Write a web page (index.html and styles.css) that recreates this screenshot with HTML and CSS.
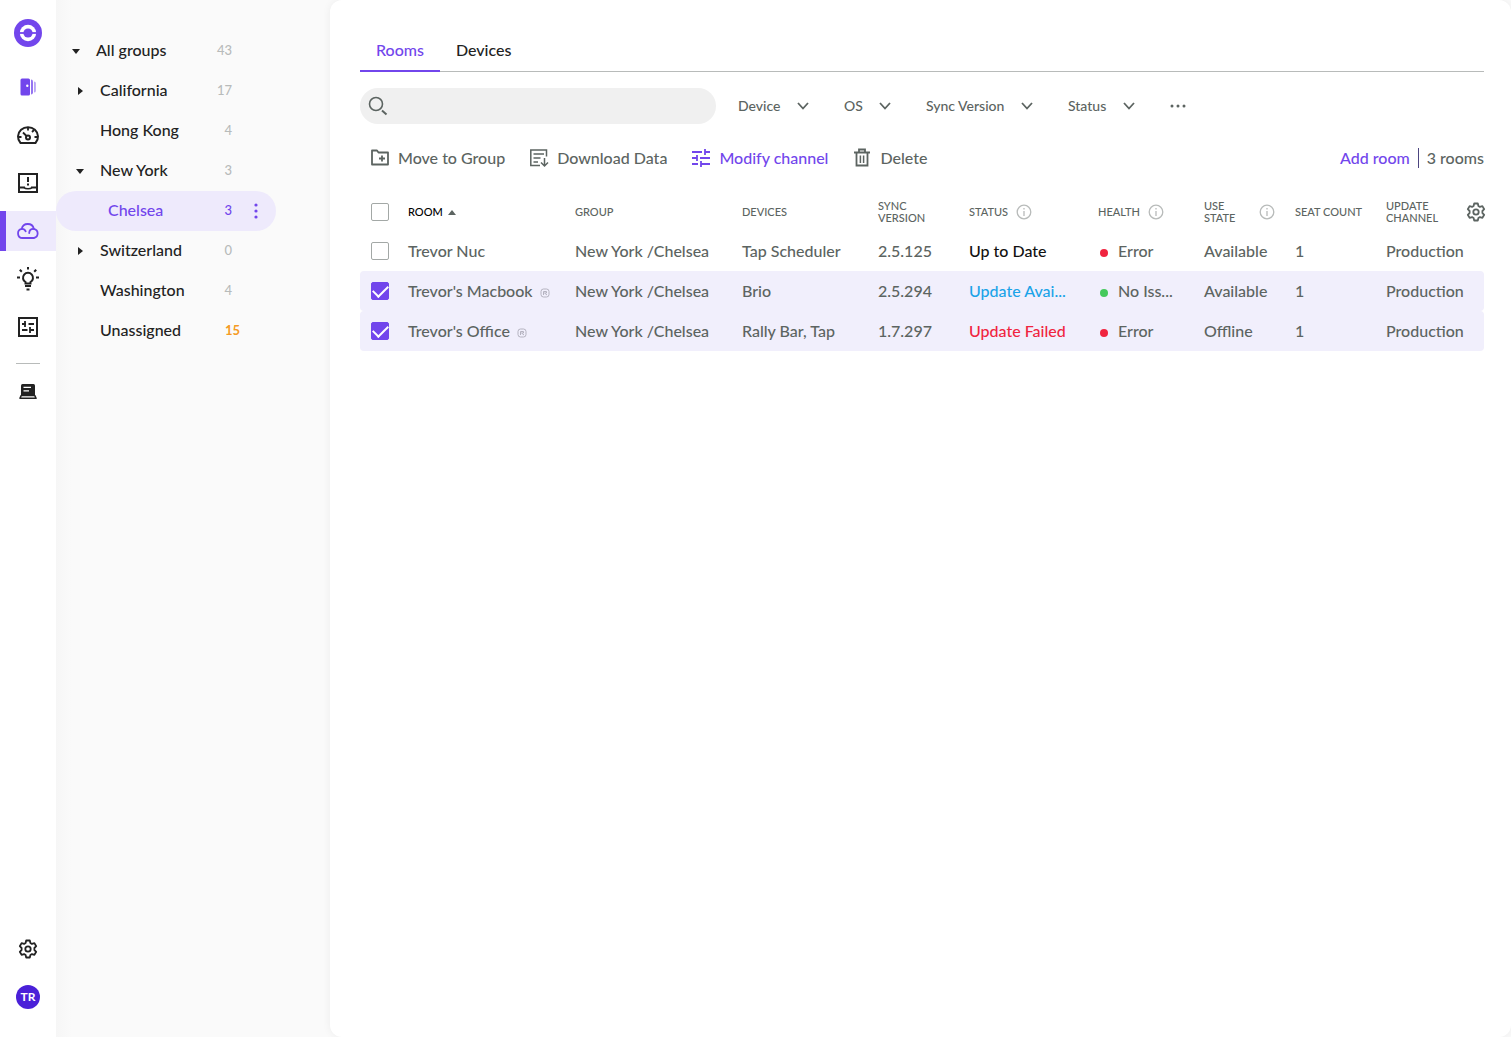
FILE: index.html
```html
<!DOCTYPE html>
<html lang="en">
<head>
    <meta charset="UTF-8">
    <meta name="viewport" content="width=device-width, initial-scale=1.0">
    <title>Sync - Rooms</title>
    <link rel="stylesheet" href="styles.css">
</head>
<body>
    <div class="app">

        <!-- Icon rail -->
        <nav class="rail" aria-label="Main">
            <a href="#" class="logo" aria-label="Home">
                <svg width="28" height="28" viewBox="0 0 28 28">
                    <circle cx="14" cy="14" r="14" fill="#7246ec"/>
                    <circle cx="14" cy="14" r="8.200" fill="#fff"/>
                    <path d="M5 14h18" stroke="#7246ec" stroke-width="1.800"/>
                    <circle cx="14" cy="14" r="4.600" fill="#7246ec"/>
                </svg>
            </a>
            <a href="#" class="rail-item" aria-label="Rooms">
                <svg width="24" height="24" viewBox="0 0 24 24" fill="#7246ec">
                    <path fill-rule="evenodd" d="M6 3.500h6.500a1.500 1.500 0 0 1 1.500 1.500v14a1.500 1.500 0 0 1-1.500 1.500H6A1.500 1.500 0 0 1 4.500 19V5A1.500 1.500 0 0 1 6 3.500zM11.300 9.600a1.200 1.200 0 1 0 0 2.400 1.200 1.200 0 0 0 0-2.400z"/>
                    <path d="M15 4.500a2 2 0 0 1 2 2v11a2 2 0 0 1-2 2z" opacity=".75"/>
                    <path d="M18.200 6.500a1.500 1.500 0 0 1 1.500 1.500v8a1.500 1.500 0 0 1-1.500 1.500z" opacity=".6"/>
                </svg>
            </a>
            <a href="#" class="rail-item" aria-label="Dashboard">
                <svg width="24" height="24" viewBox="0 0 24 24" fill="none" stroke="#222" stroke-width="2">
                    <path d="M4.500 20a10 9.500 0 1 1 15 0z" stroke-linejoin="round"/>
                    <circle cx="12" cy="14.500" r="2"/>
                    <path d="M10.500 13L7 9.500M12 4.500v3M2.500 14h3M18.500 14h3M16 9l2-2" stroke-width="1.800"/>
                </svg>
            </a>
            <a href="#" class="rail-item" aria-label="Alerts">
                <svg width="24" height="24" viewBox="0 0 24 24" fill="none" stroke="#222" stroke-width="2">
                    <path d="M3 3h18v18H3zM3 16.500h6M15 16.500h6"/>
                    <path d="M8 16.500c1.500 1.700 6.500 1.700 8 0" stroke-width="1.500"/>
                    <path d="M12 6v5M12 12.500v2"/>
                </svg>
            </a>
            <a href="#" class="rail-item active" aria-label="Updates">
                <svg width="24" height="24" viewBox="0 0 24 24" fill="none" stroke="#7246ec" stroke-width="1.800" stroke-linecap="round">
                    <path d="M6.500 19a4.600 4.600 0 0 1-.8-9.100 6.200 6.200 0 0 1 12.100-.1A4.700 4.700 0 0 1 18 19z"/>
                    <path d="M5.700 9.900c1.900-.1 3.300.8 4 2.400M17.800 9.800c-2.600-.1-4.500 1.600-4.600 4.200"/>
                </svg>
            </a>
            <a href="#" class="rail-item" aria-label="Insights">
                <svg width="24" height="24" viewBox="0 0 24 24" fill="none" stroke="#222" stroke-width="2">
                    <path d="M9.500 16.500v-1.300a5 5 0 1 1 5 0v1.300z"/>
                    <path d="M9 19h6M10.500 22.500h3M12 0v2.500M3.800 2.800l2 2M20.200 2.800l-2 2M1 10.500h3M20 10.500h3"/>
                </svg>
            </a>
            <a href="#" class="rail-item" aria-label="Room settings">
                <svg width="24" height="24" viewBox="0 0 24 24" fill="none" stroke="#222" stroke-width="2">
                    <path d="M3 3h18v18H3z"/>
                    <path d="M6 9h4M9 6v6M12.500 9H18M6 15h5.500M14 12v6M14 15h4" stroke-width="1.800"/>
                </svg>
            </a>
            <hr class="rail-line">
            <a href="#" class="rail-item" aria-label="Laptops">
                <svg width="24" height="24" viewBox="0 0 24 24">
                    <path d="M5 16V6.500A1.500 1.500 0 0 1 6.500 5h11A1.500 1.500 0 0 1 19 6.500V16z" fill="#222"/>
                    <path d="M5.200 16.500h13.600l1.200 2.700H4z" fill="#fff" stroke="#222" stroke-width="1.600" stroke-linejoin="round"/>
                    <path d="M7.500 8.300H15M7.500 11.800H13" stroke="#fff" stroke-width="1.300"/>
                </svg>
            </a>
            <a href="#" class="rail-item rail-bottom" aria-label="Settings">
                <svg class="gear" width="20" height="20" viewBox="0 0 20 20">
                    <path d="M8.200 1.500h3.600l.6 2.500 1.500.9 2.500-.8 1.800 3.100-1.800 1.800v2l1.800 1.800-1.800 3.100-2.500-.8-1.500.9-.6 2.500H8.200l-.6-2.500-1.500-.9-2.500.8-1.800-3.100L3.600 11V9L1.800 7.200l1.800-3.100 2.500.8L7.600 4z"/>
                    <circle cx="10" cy="10" r="2.700"/>
                </svg>
            </a>
            <button type="button" class="avatar">TR</button>
        </nav>

        <!-- Group tree -->
        <aside class="groups">
            <ul>
                <li><a href="#" class="group root"><span class="caret down"></span><span class="name">All groups</span><span class="count">43</span></a></li>
                <li><a href="#" class="group"><span class="caret right"></span><span class="name">California</span><span class="count">17</span></a></li>
                <li><a href="#" class="group"><span class="caret"></span><span class="name">Hong Kong</span><span class="count">4</span></a></li>
                <li><a href="#" class="group"><span class="caret down"></span><span class="name">New York</span><span class="count">3</span></a></li>
                <li class="selected">
                    <a href="#" class="group"><span class="caret"></span><span class="name">Chelsea</span><span class="count">3</span></a>
                    <button type="button" class="group-menu" aria-label="Group options">
                        <svg width="4" height="16" viewBox="0 0 4 16" fill="#7246ec"><circle cx="2" cy="2" r="1.600"/><circle cx="2" cy="8" r="1.600"/><circle cx="2" cy="14" r="1.600"/></svg>
                    </button>
                </li>
                <li><a href="#" class="group"><span class="caret right"></span><span class="name">Switzerland</span><span class="count">0</span></a></li>
                <li><a href="#" class="group"><span class="caret"></span><span class="name">Washington</span><span class="count">4</span></a></li>
                <li><a href="#" class="group unassigned"><span class="caret"></span><span class="name">Unassigned</span><span class="count">15</span></a></li>
            </ul>
        </aside>

        <main class="content">
            <nav class="tabs" aria-label="Views">
                <a href="#" class="tab active">Rooms</a>
                <a href="#" class="tab">Devices</a>
            </nav>

            <form class="filters">
                <div class="search">
                    <svg width="20" height="20" viewBox="0 0 20 20" fill="none" stroke="#5c6461" stroke-width="1.600">
                        <circle cx="8" cy="8" r="6.500"/>
                        <path d="M14 14.500l4.500 4" stroke-width="2"/>
                    </svg>
                    <input type="text" name="search" aria-label="Search rooms">
                </div>
                <div class="filter">
                    <select aria-label="Device"><option>Device</option></select>
                    <svg width="12" height="8" viewBox="0 0 12 8"><path d="M1 1l5 5.500L11 1"/></svg>
                </div>
                <div class="filter">
                    <select aria-label="OS"><option>OS</option></select>
                    <svg width="12" height="8" viewBox="0 0 12 8"><path d="M1 1l5 5.500L11 1"/></svg>
                </div>
                <div class="filter">
                    <select aria-label="Sync Version"><option>Sync Version</option></select>
                    <svg width="12" height="8" viewBox="0 0 12 8"><path d="M1 1l5 5.500L11 1"/></svg>
                </div>
                <div class="filter">
                    <select aria-label="Status"><option>Status</option></select>
                    <svg width="12" height="8" viewBox="0 0 12 8"><path d="M1 1l5 5.500L11 1"/></svg>
                </div>
                <button type="button" class="more" aria-label="More filters">
                    <svg width="16" height="4" viewBox="0 0 16 4" fill="#5c6461"><circle cx="2" cy="2" r="1.500"/><circle cx="8" cy="2" r="1.500"/><circle cx="14" cy="2" r="1.500"/></svg>
                </button>
            </form>

            <div class="toolbar">
                <button type="button" class="action">
                    <svg width="20" height="20" viewBox="0 0 20 20">
                        <path d="M2 16.500v-14h5l1.500 2H18v12z" stroke-linejoin="round"/>
                        <path d="M12 7.500v6M9 10.500h6"/>
                    </svg>
                    Move to Group
                </button>
                <button type="button" class="action">
                    <svg width="20" height="20" viewBox="0 0 20 20">
                        <path d="M11 17.500H1.800V2h15.700v6.500M4.500 6h10.500M4.500 10h7M4.500 14H9" stroke-width="1.500"/>
                        <path d="M15.500 10v7.500M12 14.500l3.500 3.500 3.500-3.500" stroke-width="1.500"/>
                    </svg>
                    Download Data
                </button>
                <button type="button" class="action primary">
                    <svg width="20" height="20" viewBox="0 0 20 20">
                        <path d="M1 4h10M14 1v6M14 4h5M1 10h5M6 7v6M9 10h10M1 16h6M10 13v6M10 16h9"/>
                    </svg>
                    Modify channel
                </button>
                <button type="button" class="action">
                    <svg width="20" height="20" viewBox="0 0 20 20">
                        <path d="M2 4.500h16M7 4V1.500h6V4M4.500 4.500v13h11v-13"/>
                        <path d="M8.400 7.500v7.500M11.600 7.500v7.500" stroke-width="1.500"/>
                    </svg>
                    Delete
                </button>
                <button type="button" class="add-room">Add room</button>
                <span class="total">3 rooms</span>
            </div>

            <table class="rooms">
                <colgroup>
                    <col class="col-check">
                    <col class="col-room">
                    <col class="col-group">
                    <col class="col-devices">
                    <col class="col-version">
                    <col class="col-status">
                    <col class="col-health">
                    <col class="col-use">
                    <col class="col-seat">
                    <col class="col-channel">
                </colgroup>
                <thead>
                    <tr>
                        <th><input type="checkbox" aria-label="Select all rooms"></th>
                        <th class="sorted">ROOM <span class="sort"></span></th>
                        <th>GROUP</th>
                        <th>DEVICES</th>
                        <th>SYNC<br>VERSION</th>
                        <th>
                            <div class="head">STATUS
                                <svg class="info" width="16" height="16" viewBox="0 0 16 16"><circle cx="8" cy="8" r="6.800"/><path d="M8 7v5M8 4v1.500"/></svg>
                            </div>
                        </th>
                        <th>
                            <div class="head">HEALTH
                                <svg class="info" width="16" height="16" viewBox="0 0 16 16"><circle cx="8" cy="8" r="6.800"/><path d="M8 7v5M8 4v1.500"/></svg>
                            </div>
                        </th>
                        <th>
                            <div class="head spread"><span>USE<br>STATE</span>
                                <svg class="info" width="16" height="16" viewBox="0 0 16 16"><circle cx="8" cy="8" r="6.800"/><path d="M8 7v5M8 4v1.500"/></svg>
                            </div>
                        </th>
                        <th>SEAT COUNT</th>
                        <th>
                            <div class="head last"><span>UPDATE<br>CHANNEL</span>
                                <button type="button" class="columns" aria-label="Table settings">
                                    <svg class="gear" width="20" height="20" viewBox="0 0 20 20">
                                        <path d="M8.200 1.500h3.600l.6 2.500 1.500.9 2.500-.8 1.800 3.100-1.800 1.800v2l1.800 1.800-1.800 3.100-2.500-.8-1.500.9-.6 2.500H8.200l-.6-2.500-1.500-.9-2.500.8-1.800-3.100L3.600 11V9L1.800 7.200l1.800-3.100 2.500.8L7.600 4z"/>
                                        <circle cx="10" cy="10" r="2.700"/>
                                    </svg>
                                </button>
                            </div>
                        </th>
                    </tr>
                </thead>
                <tbody>
                    <tr>
                        <td><input type="checkbox" aria-label="Trevor Nuc"></td>
                        <td>Trevor Nuc</td>
                        <td>New York /Chelsea</td>
                        <td>Tap Scheduler</td>
                        <td>2.5.125</td>
                        <td class="ok">Up to Date</td>
                        <td><span class="dot red"></span>Error</td>
                        <td>Available</td>
                        <td>1</td>
                        <td>Production</td>
                    </tr>
                    <tr class="checked">
                        <td><input type="checkbox" aria-label="Trevor's Macbook" checked></td>
                        <td>Trevor's Macbook
                            <svg class="tag" width="10" height="10" viewBox="0 0 10 10"><rect x="1" y="1" width="8" height="8" rx="2.500"/><path d="M3.500 7V3.500h3V5h-2L7 7"/></svg>
                        </td>
                        <td>New York /Chelsea</td>
                        <td>Brio</td>
                        <td>2.5.294</td>
                        <td class="available">Update Avai...</td>
                        <td><span class="dot green"></span>No Iss...</td>
                        <td>Available</td>
                        <td>1</td>
                        <td>Production</td>
                    </tr>
                    <tr class="checked">
                        <td><input type="checkbox" aria-label="Trevor's Office" checked></td>
                        <td>Trevor's Office
                            <svg class="tag" width="10" height="10" viewBox="0 0 10 10"><rect x="1" y="1" width="8" height="8" rx="2.500"/><path d="M3.500 7V3.500h3V5h-2L7 7"/></svg>
                        </td>
                        <td>New York /Chelsea</td>
                        <td>Rally Bar, Tap</td>
                        <td>1.7.297</td>
                        <td class="failed">Update Failed</td>
                        <td><span class="dot red"></span>Error</td>
                        <td>Offline</td>
                        <td>1</td>
                        <td>Production</td>
                    </tr>
                </tbody>
            </table>
        </main>
    </div>
</body>
</html>
```

FILE: styles.css
```css
* {
    box-sizing: border-box;
}

body {
    margin: 0;
    font-family: Lato, "Liberation Sans", sans-serif;
    font-size: 16px;
    font-weight: 500;
    line-height: 20px;
    color: #222;
    background: #fafafa;
}

a {
    color: inherit;
    text-decoration: none;
}

button {
    padding: 0;
    border: none;
    background: none;
    font: inherit;
    color: inherit;
    cursor: pointer;
}

svg {
    display: block;
    flex-shrink: 0;
}

.app {
    display: flex;
    min-height: 100vh;
}

/* icon rail */
.rail {
    width: 56px;
    flex-shrink: 0;
    display: flex;
    flex-direction: column;
    align-items: center;
    gap: 8px;
    padding: 19px 0 28px;
    background: #fff;
}

.logo {
    margin-bottom: 12px;
}

.rail-item {
    width: 100%;
    height: 40px;
    display: flex;
    align-items: center;
    justify-content: center;
}

.rail-item.active {
    background: #eeeafc;
    box-shadow: inset 6px 0 0 #7246ec;
}

.rail-line {
    width: 24px;
    height: 1px;
    margin: 8px 0 -1px;
    border: none;
    background: #b8bbba;
}

.rail-bottom {
    margin-top: auto;
}

.gear {
    fill: none;
    stroke: #222;
    stroke-width: 1.8;
    stroke-linejoin: round;
}

.avatar {
    width: 24px;
    height: 24px;
    margin-top: 8px;
    border-radius: 50%;
    background: #4a20d8;
    color: #fff;
    font-size: 12px;
    font-weight: bold;
}

/* group tree */
.groups {
    width: 274px;
    flex-shrink: 0;
    padding-top: 31px;
    background: linear-gradient(to right, #f6f6f6, #fafafa 16px);
}

.groups ul {
    width: 220px;
    margin: 0;
    padding: 0;
    list-style: none;
}

.groups li {
    position: relative;
}

.group {
    display: flex;
    align-items: center;
    height: 40px;
    padding: 0 44px 2px 16px;
}

.group.root {
    padding-left: 12px;
}

.group.unassigned {
    padding-right: 36px;
}

.caret {
    width: 16px;
    margin-right: 12px;
    display: flex;
    justify-content: center;
}

.caret.down::before {
    content: "";
    margin-top: 2px;
    border: 4px solid transparent;
    border-top: 5px solid #222;
    border-bottom: none;
}

.caret.right::before {
    content: "";
    margin-top: 2px;
    border: 4px solid transparent;
    border-left: 5px solid #222;
    border-right: none;
}

.name {
    flex: 1;
}

.count {
    font-size: 13px;
    color: #b8bbba;
}

.unassigned .count {
    color: #f59b23;
    font-weight: bold;
}

.selected {
    border-radius: 20px;
    background: #eeeafc;
    color: #7246ec;
}

.selected .group {
    padding-left: 24px;
}

.selected .count {
    color: #7246ec;
}

.group-menu {
    position: absolute;
    top: 12px;
    right: 12px;
    width: 16px;
    height: 16px;
    display: flex;
    justify-content: center;
}

/* main panel */
.content {
    flex: 1;
    min-width: 0;
    padding: 32px 27px 32px 30px;
    border-radius: 12px;
    background: #fff;
    box-shadow: 0 0 8px rgba(0, 0, 0, 0.06);
}

.tabs {
    display: flex;
    height: 40px;
    box-shadow: inset 0 -1px 0 #b8bbba;
}

.tab {
    padding: 8px 16px 10px;
}

.tab.active {
    color: #7246ec;
    border-bottom: 2px solid #7246ec;
}

.filters {
    display: flex;
    align-items: center;
    gap: 35px;
    margin-top: 16px;
    font-size: 14px;
    color: #5c6461;
}

.search {
    width: 356px;
    height: 36px;
    display: flex;
    align-items: center;
    gap: 8px;
    margin-right: -13px;
    padding: 0 16px 0 8px;
    border-radius: 18px;
    background: #f0f0f0;
}

.search input {
    flex: 1;
    min-width: 0;
    border: none;
    outline: none;
    background: none;
    font: inherit;
}

.filter {
    position: relative;
}

.filter select {
    appearance: none;
    display: block;
    height: 20px;
    padding: 0 28px 0 0;
    border: none;
    background: none;
    font: inherit;
    color: inherit;
}

.filter svg {
    position: absolute;
    top: 6px;
    right: 0;
    pointer-events: none;
    fill: none;
    stroke: #5c6461;
    stroke-width: 1.8;
}

.toolbar {
    display: flex;
    align-items: center;
    height: 24px;
    gap: 24px;
    margin-top: 22px;
    padding-left: 10px;
    color: #5c6461;
}

.action {
    display: flex;
    align-items: center;
    gap: 8px;
}

.action svg {
    fill: none;
    stroke: currentColor;
    stroke-width: 1.8;
}

.primary,
.add-room {
    color: #7246ec;
}

.add-room {
    margin-left: auto;
    margin-right: -16px;
}

.total {
    padding-left: 8px;
    border-left: 1px solid #4c4580;
}

/* rooms table */
.rooms {
    width: 100%;
    margin-top: 21px;
    table-layout: fixed;
    border-collapse: separate;
    border-spacing: 0;
    color: #5c6461;
}

.col-check { width: 48px; }
.col-room { width: 167px; }
.col-group { width: 167px; }
.col-devices { width: 136px; }
.col-version { width: 91px; }
.col-status { width: 129px; }
.col-health { width: 106px; }
.col-use { width: 91px; }
.col-seat { width: 91px; }
.col-channel { width: 98px; }

.rooms th,
.rooms td {
    height: 40px;
    padding: 0;
    text-align: left;
    white-space: nowrap;
}

.rooms th {
    padding-top: 2px;
    font-size: 11px;
    font-weight: 500;
    line-height: 12px;
}

.rooms th:first-child,
.rooms td:first-child {
    padding-left: 11px;
}

.rooms .sorted {
    color: #000;
}

.sort {
    display: inline-block;
    margin-left: 2px;
    border: 4px solid transparent;
    border-top: none;
    border-bottom: 5px solid #5c6461;
    vertical-align: 1px;
}

.head {
    display: flex;
    align-items: center;
    gap: 8px;
}

.head.spread {
    justify-content: space-between;
    padding-right: 20px;
}

.head.last {
    justify-content: space-between;
    margin-right: -2px;
}

.info {
    fill: none;
    stroke: #b8bbba;
    stroke-width: 1.3;
}

.columns .gear {
    stroke: #5c6461;
}

.checked td {
    background: #f1effc;
}

.checked td:first-child {
    border-radius: 4px 0 0 4px;
}

.checked td:last-child {
    border-radius: 0 4px 4px 0;
}

.rooms input {
    appearance: none;
    display: flex;
    align-items: center;
    justify-content: center;
    width: 18px;
    height: 18px;
    margin: 0;
    border: 1px solid #a3a8a6;
    border-radius: 2px;
    background: #fff;
}

.rooms input:checked {
    border-color: #7246ec;
    background: #7246ec;
}

.rooms input:checked::before {
    content: "";
    width: 13px;
    height: 7px;
    flex-shrink: 0;
    margin-bottom: 4px;
    border-left: 2px solid #fff;
    border-bottom: 2px solid #fff;
    transform: rotate(-45deg);
}

.tag {
    display: inline-block;
    margin-left: 3px;
    vertical-align: -1px;
    fill: none;
    stroke: #b5b3c0;
}

.dot {
    display: inline-block;
    width: 8px;
    height: 8px;
    margin: 0 10px 0 2px;
    border-radius: 50%;
    vertical-align: 0;
}

.red { background: #f0243f; }
.green { background: #45c95c; }

.ok { color: #111; }
.available { color: #1ba3e8; }
.failed { color: #f0243f; }
```
